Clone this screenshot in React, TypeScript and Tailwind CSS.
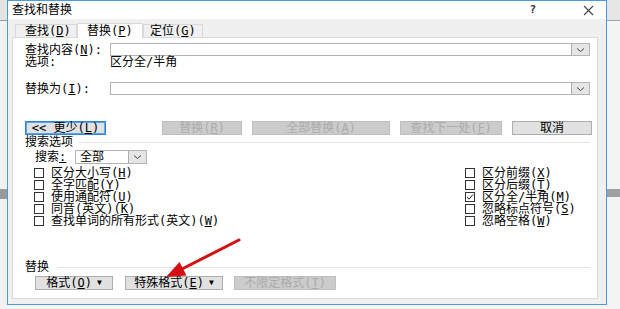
import React from "react";

// Word "查找和替换" dialog, replace tab with options expanded.

function K({ t, k, after = "" }: { t: string; k: string; after?: string }) {
  return (
    <span>
      {t}(<u>{k}</u>){after}
    </span>
  );
}

function Chevron() {
  return (
    <svg width="9" height="6" viewBox="0 0 9 6" className="block">
      <path d="M1 1.5 L4.5 4.5 L8 1.5" fill="none" stroke="#444" strokeWidth="1" />
    </svg>
  );
}

function DropBtn() {
  return (
    <div className="w-[18px] h-full bg-[#e5e5e5] border-l border-[#acacac] flex items-center justify-center">
      <Chevron />
    </div>
  );
}

function Btn({
  children,
  w,
  disabled = false,
  focused = false,
  className = "",
}: {
  children: React.ReactNode;
  w: string;
  disabled?: boolean;
  focused?: boolean;
  className?: string;
}) {
  const tone = disabled
    ? "bg-[#cccccc] border-[#bfbfbf] text-[#ababab]"
    : focused
      ? "bg-[#e1e1e1] border-[#2f86d8] shadow-[inset_0_0_0_1px_#5aa3e6] text-black"
      : "bg-[#e1e1e1] border-[#adadad] text-black";
  return (
    <div className={`${w} h-[14px] border ${tone} flex items-center justify-center leading-[12px] ${className}`}>
      {children}
    </div>
  );
}

function Box({ checked = false }: { checked?: boolean }) {
  return (
    <div className="w-[10px] h-[10px] border border-[#333] bg-white flex items-center justify-center shrink-0">
      {checked && (
        <svg width="8" height="8" viewBox="0 0 8 8" className="block">
          <path d="M1 4 L3 6.2 L7 1.5" fill="none" stroke="#222" strokeWidth="1" />
        </svg>
      )}
    </div>
  );
}

function Check({ children, checked = false }: { children: React.ReactNode; checked?: boolean }) {
  return (
    <div className="h-[12px] flex items-center">
      <Box checked={checked} />
      <span className="ml-[7px] leading-[12px] whitespace-nowrap">{children}</span>
    </div>
  );
}

function Tab({ children, w, active = false, pl }: { children: React.ReactNode; w: string; active?: boolean; pl: string }) {
  if (active) {
    return (
      <div className={`${w} ${pl} h-[15px] mt-[3px] bg-white border border-b-0 border-[#d9d9d9] flex items-center leading-[12px] relative top-[1px] z-10`}>
        {children}
      </div>
    );
  }
  return (
    <div className={`${w} ${pl} h-[13px] mt-[5px] bg-[#f0f0f0] border border-b-0 border-[#d9d9d9] flex items-center leading-[12px]`}>
      {children}
    </div>
  );
}

export default function App() {
  return (
    <div className="relative w-[620px] h-[309px] flex flex-col bg-[#f1f1f1] overflow-hidden font-['DejaVu_Sans_Mono','Noto_Sans_CJK_SC',monospace] text-[12px] text-black">
      <div className="flex h-[305px]">
        {/* window behind, left */}
        <div className="w-[7px] flex flex-col">
          <div className="h-[20px] bg-[#e4e4e4]" />
          <div className="h-px bg-[#9c9c9c]" />
          <div className="h-[168px] bg-[#f2f2f2]" />
          <div className="h-[10px] bg-[#9a9a9a]" />
          <div className="flex-1 bg-[#f2f2f2]" />
        </div>

        {/* dialog */}
        <div className="w-[600px] h-[305px] border border-[#4f98dc] flex flex-col bg-[#f0f0f0]">
          <div className="h-[18px] bg-white flex items-center pl-[4px] leading-[12px]">
            <span>查找和替换</span>
            <span className="ml-auto mr-[47px] font-bold text-[11px] text-[#333]">?</span>
            <svg width="11" height="11" viewBox="0 0 11 11" className="mr-[12px]">
              <path d="M1 1 L10 10 M10 1 L1 10" stroke="#444" strokeWidth="1.1" />
            </svg>
          </div>

          <div className="h-[18px] flex pl-[7px]">
            <Tab w="w-[62px]" pl="pl-[9px]">
              <K t="查找" k="D" />
            </Tab>
            <Tab w="w-[66px]" pl="pl-[9px]" active>
              <K t="替换" k="P" />
            </Tab>
            <Tab w="w-[60px]" pl="pl-[6px]">
              <K t="定位" k="G" />
            </Tab>
          </div>

          <div className="ml-[4px] w-[586px] h-[262px] bg-white border border-[#d9d9d9] flex flex-col leading-[12px]">
            <div className="mt-[5px] h-[13px] flex items-center pl-[12px] pr-[7px]">
              <span className="w-[85px] shrink-0">
                <K t="查找内容" k="N" after=":" />
              </span>
              <div className="flex-1 h-[13px] border border-[#b4b4b4] bg-white flex justify-end">
                <DropBtn />
              </div>
            </div>
            <div className="h-[12px] flex items-center pl-[12px]">
              <span className="w-[85px] shrink-0">选项:</span>
              <span>区分全/半角</span>
            </div>

            <div className="mt-[14px] h-[13px] flex items-center pl-[12px] pr-[7px]">
              <span className="w-[85px] shrink-0">
                <K t="替换为" k="I" after=":" />
              </span>
              <div className="flex-1 h-[13px] border border-[#b4b4b4] bg-white flex justify-end">
                <DropBtn />
              </div>
            </div>

            <div className="mt-[26px] h-[14px] flex items-center pl-[12px]">
              <Btn w="w-[81px]" focused>
                <span>
                  &lt;&lt; 更少(<u>L</u>)
                </span>
              </Btn>
              <Btn w="w-[80px]" disabled className="ml-[56px]">
                <K t="替换" k="R" />
              </Btn>
              <Btn w="w-[138px]" disabled className="ml-[10px]">
                <K t="全部替换" k="A" />
              </Btn>
              <Btn w="w-[102px]" disabled className="ml-[10px]">
                <K t="查找下一处" k="F" />
              </Btn>
              <Btn w="w-[80px]" className="ml-[10px]">
                取消
              </Btn>
            </div>

            <div className="mt-[1px] h-[12px] flex items-center pl-[12px] pr-[7px]">
              <span>搜索选项</span>
              <div className="flex-1 h-px bg-[#e3e3e3] ml-[6px]" />
            </div>

            <div className="mt-[2px] h-[14px] flex items-center pl-[22px]">
              <span className="w-[40px] shrink-0">
                搜索<u>:</u>
              </span>
              <div className="w-[72px] h-[14px] border border-[#b4b4b4] bg-white flex items-center">
                <span className="pl-[4px] flex-1">全部</span>
                <DropBtn />
              </div>
            </div>

            <div className="mt-[3px] flex">
              <div className="w-[452px] pl-[21px] flex flex-col">
                <Check>
                  <K t="区分大小写" k="H" />
                </Check>
                <Check>
                  <K t="全字匹配" k="Y" />
                </Check>
                <Check>
                  <K t="使用通配符" k="U" />
                </Check>
                <Check>
                  <K t="同音(英文)" k="K" />
                </Check>
                <Check>
                  <K t="查找单词的所有形式(英文)" k="W" />
                </Check>
              </div>
              <div className="flex flex-col">
                <Check>
                  <K t="区分前缀" k="X" />
                </Check>
                <Check>
                  <K t="区分后缀" k="T" />
                </Check>
                <Check checked>
                  <K t="区分全/半角" k="M" />
                </Check>
                <Check>
                  <K t="忽略标点符号" k="S" />
                </Check>
                <Check>
                  <K t="忽略空格" k="W" />
                </Check>
              </div>
            </div>

            <div className="mt-[34px] h-[12px] flex items-center pl-[12px] pr-[7px]">
              <span>替换</span>
              <div className="flex-1 h-px bg-[#e3e3e3] ml-[9px]" />
            </div>

            <div className="mt-[3px] h-[14px] flex items-center pl-[22px]">
              <Btn w="w-[78px]">
                <K t="格式" k="O" />
                <span className="ml-[5px] text-[8px]">▼</span>
              </Btn>
              <Btn w="w-[98px]" className="ml-[12px]">
                <K t="特殊格式" k="E" />
                <span className="ml-[5px] text-[8px]">▼</span>
              </Btn>
              <Btn w="w-[102px]" disabled className="ml-[11px]">
                <K t="不限定格式" k="T" />
              </Btn>
            </div>
          </div>
        </div>

        {/* window behind, right */}
        <div className="flex-1 flex flex-col">
          <div className="h-[20px] bg-[#e6e6e6]" />
          <div className="h-px bg-[#a3a3a3]" />
          <div className="h-[168px] bg-[#f4f4f4]" />
          <div className="h-[8px] bg-[#a0a0a0]" />
          <div className="flex-1 bg-[#f4f4f4]" />
        </div>
      </div>
      <div className="flex-1 bg-[#f4f4f4]" />

      {/* red annotation arrow */}
      <svg className="absolute left-0 top-0 pointer-events-none" width="620" height="309" viewBox="0 0 620 309">
        <line x1="239" y1="240" x2="180" y2="270" stroke="#d40f0f" strokeWidth="3" strokeLinecap="round" />
        <polygon points="166,277 179.5,262 186.5,275.5" fill="#d40f0f" />
      </svg>
    </div>
  );
}
